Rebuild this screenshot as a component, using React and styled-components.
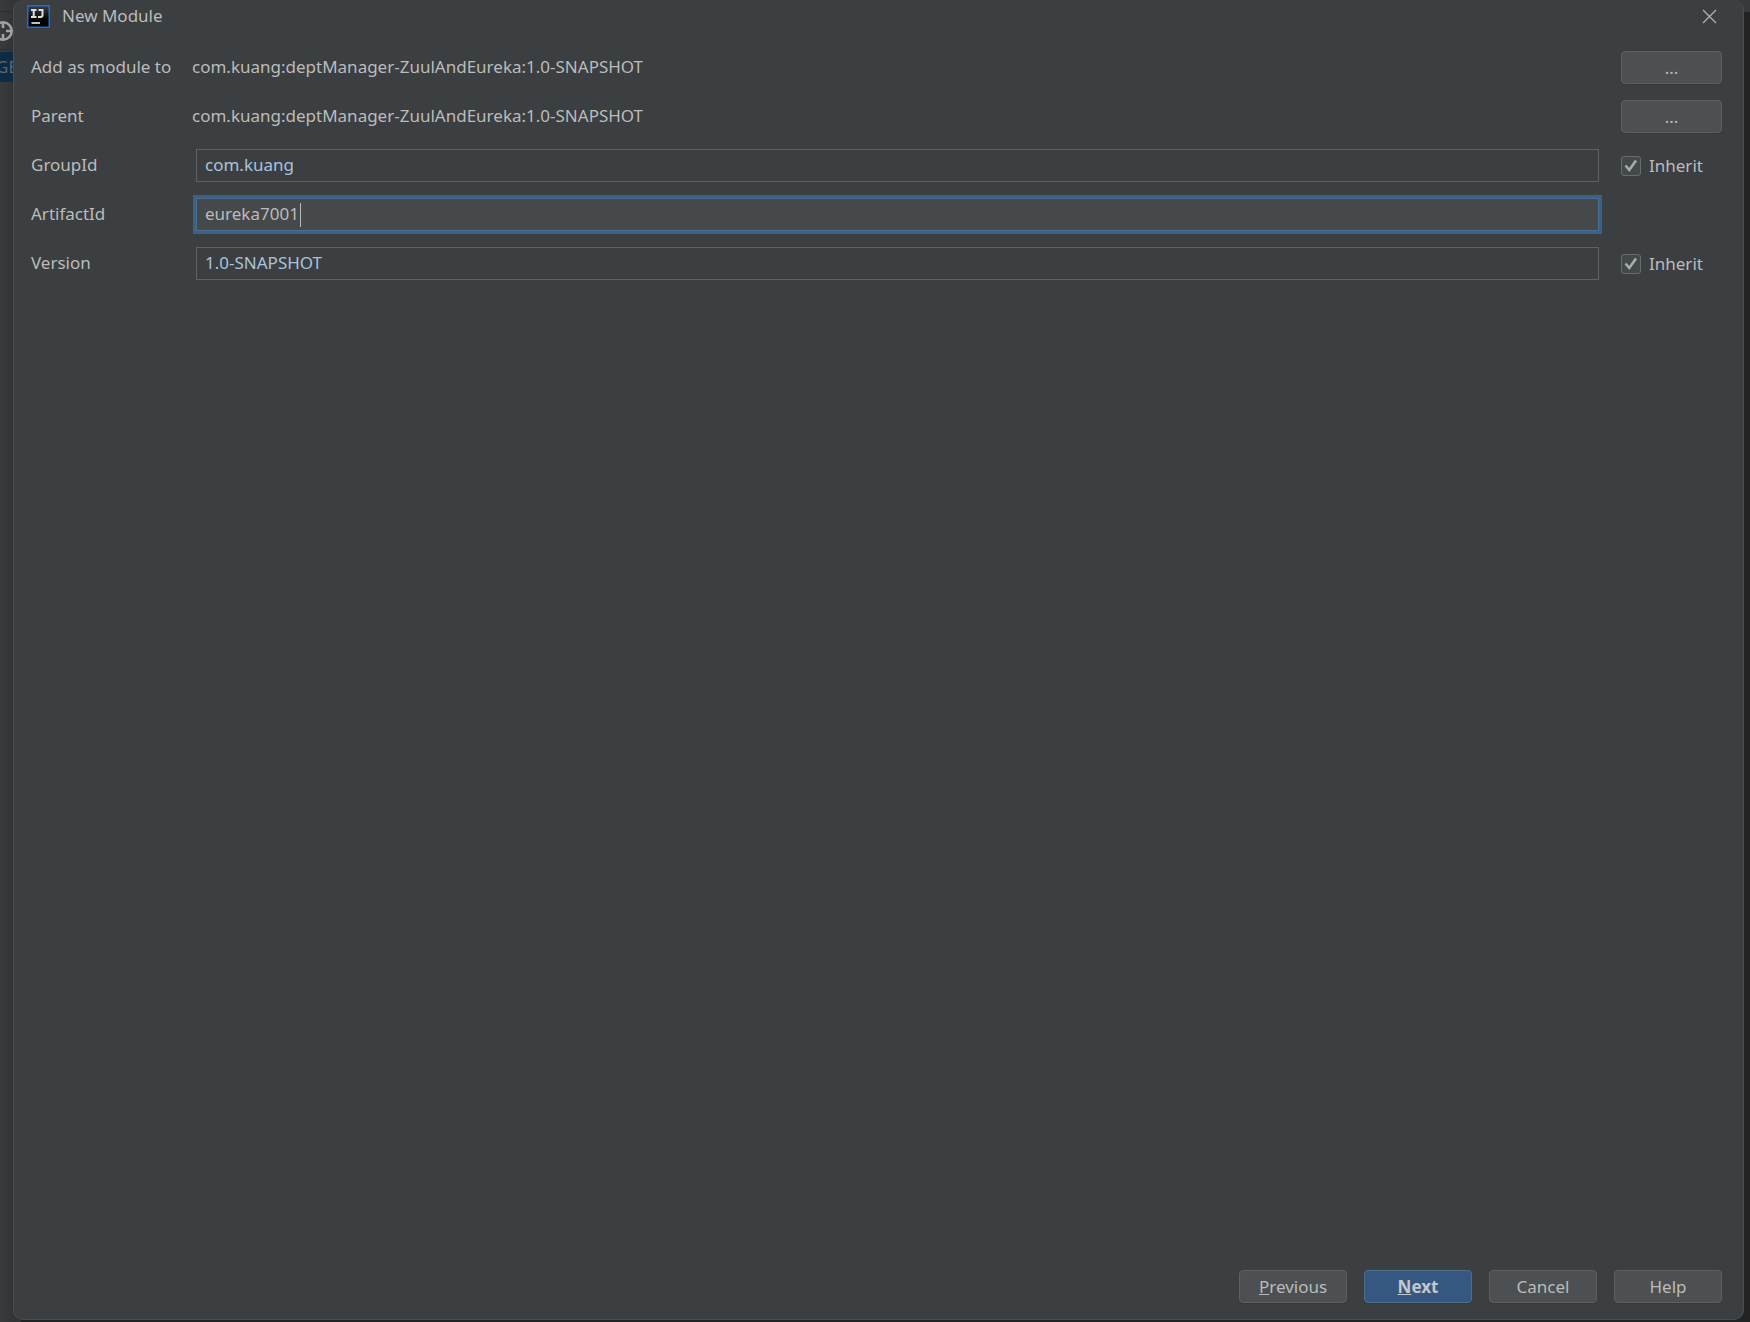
import React, { useState } from "react";
import styled, { createGlobalStyle } from "styled-components";

const GlobalStyle = createGlobalStyle`
  *, *::before, *::after { box-sizing: border-box; }
  body { margin: 0; background: #222222; }
  body, button, input {
    font-family: "Noto Sans", "Open Sans", "Noto Sans CJK SC", sans-serif;
    font-size: 17px;
    line-height: 24px;
    color: #bbbbbb;
  }
`;

const Desktop = styled.div`
  display: flex;
  min-height: 100vh;
  padding: 0 6px 2px 0;
  background: linear-gradient(#37393a 12px, #222222 12px);
`;

const IdeStrip = styled.aside`
  display: flex;
  flex-direction: column;
  flex: 0 0 21px;
  margin: 0 -8px -2px 0;
  overflow: hidden;
  background: linear-gradient(90deg, #393b3c, #323435 13px);
`;

const StripMenu = styled.div`
  height: 12px;
  border-bottom: 1px solid #2d2e2f;
`;

const StripToolbar = styled.div`
  display: flex;
  align-items: center;
  height: 38px;
  border-bottom: 1px solid #2d2e2f;

  svg { flex: none; margin-left: -8px; }
`;

const StripTab = styled.div`
  height: 30px;
  margin-top: 2px;
  line-height: 30px;
  text-indent: -4px;
  white-space: nowrap;
  color: #5b6670;
  background: #0d2b42;
`;

const Dialog = styled.form`
  position: relative;
  display: flex;
  flex-direction: column;
  flex: 1;
  min-width: 0;
  padding: 0 21px 16px 17px;
  background: #3c3f41;
  border: 1px solid #4b4d4e;
  border-top: 0;
  border-radius: 10px;
`;

const TitleBar = styled.header`
  display: flex;
  align-items: center;
  height: 32px;
  margin-left: -4px;
`;

const Title = styled.h1`
  flex: 1;
  margin: 0 0 0 12px;
  font: inherit;
`;

const CloseButton = styled.button`
  display: flex;
  padding: 5px;
  background: none;
  border: 0;
`;

const Fields = styled.div`
  display: grid;
  row-gap: 16px;
  margin-top: 19px;
`;

const Row = styled.div`
  display: grid;
  grid-template-columns: 161px 1fr 101px;
  align-items: center;
  height: 33px;
`;

const RowText = styled.span`
  padding-bottom: 2px;
`;

const fieldBox = `
  margin: 0 22px 0 4px;
  height: 33px;
`;

const TextField = styled.input`
  ${fieldBox}
  min-width: 0;
  padding: 0 8px 2px;
  color: #a9c3de;
  background: #3c3f41;
  border: 1px solid #5f6162;
  outline: 0;
`;

const FocusedField = styled.div`
  ${fieldBox}
  display: flex;
  align-items: center;
  padding: 0 8px;
  background: #45494a;
  border: 1px solid #466d94;
  box-shadow: 0 0 0 3px #3d6185;
`;

const BareInput = styled.input`
  field-sizing: content;
  padding: 0 1px 2px 0;
  background: none;
  border: 0;
  outline: 0;
  caret-color: transparent;
`;

const Caret = styled.span`
  width: 1px;
  height: 24px;
  background: #bbbbbb;
`;

const Button = styled.button`
  height: 33px;
  padding: 0;
  color: ${(p) => (p.$primary ? "#c3c7cb" : "#bbbbbb")};
  font-weight: ${(p) => (p.$primary ? 700 : 400)};
  background: ${(p) => (p.$primary ? "#365880" : "#4c5052")};
  border: 1px solid ${(p) => (p.$primary ? "#4c708c" : "#5e6060")};
  border-radius: 4px;
  box-shadow: 0 1px 1px #36393a;
`;

const CheckLabel = styled.label`
  display: flex;
  align-items: center;
  gap: 8px;
`;

const CheckFrame = styled.span`
  display: grid;
  width: 20px;
  height: 20px;

  > * { grid-area: 1 / 1; }
  svg { pointer-events: none; }
`;

const CheckInput = styled.input`
  appearance: none;
  width: 20px;
  height: 20px;
  margin: 0;
  background: #43494a;
  border: 1px solid #6b6b6b;
  border-radius: 3px;

  &:not(:checked) + svg { visibility: hidden; }
`;

const Footer = styled.footer`
  display: grid;
  grid-template-columns: repeat(4, 108px);
  justify-content: end;
  gap: 17px;
  margin-top: auto;
`;

const TargetIcon = () => (
  <svg width="22" height="22" viewBox="0 0 22 22" fill="none" stroke="#a0a2a3" strokeWidth="2.600" aria-hidden="true">
    <circle cx="11" cy="11" r="8.700" />
    <path d="M11 2v6M11 14v6M2 11h6M14 11h6" />
  </svg>
);

const IdeaLogo = () => (
  <svg width="23" height="23" viewBox="0 0 23 23" fill="none" aria-hidden="true">
    <defs>
      <linearGradient id="logoFace" x1="0" y1="0" x2="0" y2="1">
        <stop offset="0" stopColor="#3a3a3a" />
        <stop offset="0.7" stopColor="#000000" />
      </linearGradient>
    </defs>
    <rect width="23" height="23" rx="1" fill="#1670d8" />
    <rect x="1.500" y="1.500" width="20" height="20" fill="url(#logoFace)" />
    <path d="M4 5h5.500M6.700 5v7M4 12h5.500M11.500 5h4v5q0 2-2 2h-2.500" stroke="#dedede" strokeWidth="2" />
    <path d="M4.500 18h8.500" stroke="#ffffff" strokeWidth="1.500" />
  </svg>
);

const CloseIcon = () => (
  <svg width="15" height="15" viewBox="0 0 15 15" stroke="#afb1b3" strokeWidth="1.300" aria-hidden="true">
    <path d="M1 1l13 13M14 1l-13 13" />
  </svg>
);

const CheckIcon = () => (
  <svg width="20" height="20" viewBox="0 0 20 20" fill="none" stroke="#a9abac" strokeWidth="2.600" aria-hidden="true">
    <path d="M4.500 9.500l3.800 4.500L15 4.500" />
  </svg>
);

function Inherit({ id }) {
  return (
    <CheckLabel htmlFor={id}>
      <CheckFrame>
        <CheckInput id={id} type="checkbox" defaultChecked />
        <CheckIcon />
      </CheckFrame>
      Inherit
    </CheckLabel>
  );
}

const PROJECT = "com.kuang:deptManager-ZuulAndEureka:1.0-SNAPSHOT";

export default function App() {
  const [artifactId, setArtifactId] = useState("eureka7001");

  return (
    <>
      <GlobalStyle />
      <Desktop>
        <IdeStrip>
          <StripMenu />
          <StripToolbar>
            <TargetIcon />
          </StripToolbar>
          <StripTab>GE</StripTab>
        </IdeStrip>
        <Dialog onSubmit={(e) => e.preventDefault()}>
          <TitleBar>
            <IdeaLogo />
            <Title>New Module</Title>
            <CloseButton type="button" aria-label="Close">
              <CloseIcon />
            </CloseButton>
          </TitleBar>
          <Fields>
            <Row>
              <RowText>Add as module to</RowText>
              <RowText>{PROJECT}</RowText>
              <Button type="button">...</Button>
            </Row>
            <Row>
              <RowText>Parent</RowText>
              <RowText>{PROJECT}</RowText>
              <Button type="button">...</Button>
            </Row>
            <Row>
              <RowText as="label" htmlFor="groupId">GroupId</RowText>
              <TextField id="groupId" defaultValue="com.kuang" readOnly />
              <Inherit id="inheritGroup" />
            </Row>
            <Row>
              <RowText as="label" htmlFor="artifactId">ArtifactId</RowText>
              <FocusedField>
                <BareInput
                  id="artifactId"
                  value={artifactId}
                  onChange={(e) => setArtifactId(e.target.value)}
                />
                <Caret />
              </FocusedField>
            </Row>
            <Row>
              <RowText as="label" htmlFor="version">Version</RowText>
              <TextField id="version" defaultValue="1.0-SNAPSHOT" readOnly />
              <Inherit id="inheritVersion" />
            </Row>
          </Fields>
          <Footer>
            <Button type="button"><u>P</u>revious</Button>
            <Button type="submit" $primary><u>N</u>ext</Button>
            <Button type="button">Cancel</Button>
            <Button type="button">Help</Button>
          </Footer>
        </Dialog>
      </Desktop>
    </>
  );
}
